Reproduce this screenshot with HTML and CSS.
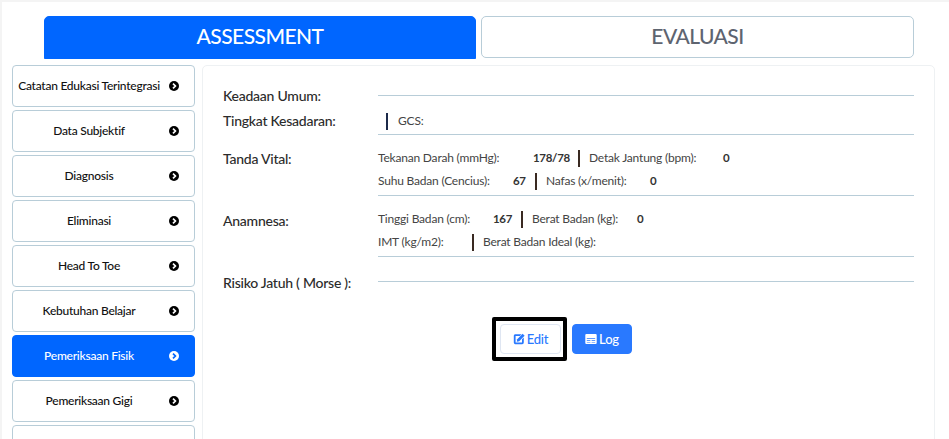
FILE: index.html
```html
<!DOCTYPE html>
<html lang="id">
<head>
<meta charset="utf-8">
<title>Assessment</title>
<link rel="stylesheet" href="styles.css">
</head>
<body>
<div class="page">
  <div class="tabs">
    <div class="tab tab-active">ASSESSMENT</div>
    <div class="tab tab-plain">EVALUASI</div>
  </div>
  <div class="content">
    <nav class="side">
      <a class="item"><span class="item-label">Catatan Edukasi Terintegrasi</span><svg class="chev" viewBox="0 0 10 10"><circle cx="5" cy="5" r="5" fill="currentColor"/><path class="chev-p" d="M4 2.6 6.4 5 4 7.4" fill="none" stroke-width="1.7"/></svg></a>
      <a class="item"><span class="item-label">Data Subjektif</span><svg class="chev" viewBox="0 0 10 10"><circle cx="5" cy="5" r="5" fill="currentColor"/><path class="chev-p" d="M4 2.6 6.4 5 4 7.4" fill="none" stroke-width="1.7"/></svg></a>
      <a class="item"><span class="item-label">Diagnosis</span><svg class="chev" viewBox="0 0 10 10"><circle cx="5" cy="5" r="5" fill="currentColor"/><path class="chev-p" d="M4 2.6 6.4 5 4 7.4" fill="none" stroke-width="1.7"/></svg></a>
      <a class="item"><span class="item-label">Eliminasi</span><svg class="chev" viewBox="0 0 10 10"><circle cx="5" cy="5" r="5" fill="currentColor"/><path class="chev-p" d="M4 2.6 6.4 5 4 7.4" fill="none" stroke-width="1.7"/></svg></a>
      <a class="item"><span class="item-label">Head To Toe</span><svg class="chev" viewBox="0 0 10 10"><circle cx="5" cy="5" r="5" fill="currentColor"/><path class="chev-p" d="M4 2.6 6.4 5 4 7.4" fill="none" stroke-width="1.7"/></svg></a>
      <a class="item"><span class="item-label">Kebutuhan Belajar</span><svg class="chev" viewBox="0 0 10 10"><circle cx="5" cy="5" r="5" fill="currentColor"/><path class="chev-p" d="M4 2.6 6.4 5 4 7.4" fill="none" stroke-width="1.7"/></svg></a>
      <a class="item item-active"><span class="item-label">Pemeriksaan Fisik</span><svg class="chev" viewBox="0 0 10 10"><circle cx="5" cy="5" r="5" fill="currentColor"/><path class="chev-p" d="M4 2.6 6.4 5 4 7.4" fill="none" stroke-width="1.7"/></svg></a>
      <a class="item"><span class="item-label">Pemeriksaan Gigi</span><svg class="chev" viewBox="0 0 10 10"><circle cx="5" cy="5" r="5" fill="currentColor"/><path class="chev-p" d="M4 2.6 6.4 5 4 7.4" fill="none" stroke-width="1.7"/></svg></a>
      <a class="item"></a>
    </nav>
    <main class="card">
      <div class="row row-keadaan">
        <div class="label">Keadaan Umum:</div>
        <div class="val val-keadaan"></div>
      </div>
      <div class="row row-tingkat">
        <div class="label">Tingkat Kesadaran:</div>
        <div class="val val-tingkat"><span class="bar bar-gcs"></span><span class="small">GCS:</span></div>
      </div>
      <div class="row row-vital">
        <div class="label">Tanda Vital:</div>
        <div class="val val-multi">
          <div class="line">
            <span class="small w-darah">Tekanan Darah (mmHg):</span><b class="num n-darah">178/78</b><span class="bar"></span><span class="small w-jantung">Detak Jantung (bpm):</span><b class="num">0</b>
          </div>
          <div class="line">
            <span class="small w-suhu">Suhu Badan (Cencius):</span><b class="num n-suhu">67</b><span class="bar"></span><span class="small w-nafas">Nafas (x/menit):</span><b class="num">0</b>
          </div>
        </div>
      </div>
      <div class="row row-anam">
        <div class="label">Anamnesa:</div>
        <div class="val val-multi">
          <div class="line">
            <span class="small w-tinggi">Tinggi Badan (cm):</span><b class="num n-tinggi">167</b><span class="bar"></span><span class="small w-berat">Berat Badan (kg):</span><b class="num">0</b>
          </div>
          <div class="line">
            <span class="small w-imt">IMT (kg/m2):</span><span class="bar"></span><span class="small">Berat Badan Ideal (kg):</span>
          </div>
        </div>
      </div>
      <div class="row row-risiko">
        <div class="label">Risiko Jatuh ( Morse ):</div>
        <div class="val val-risiko"></div>
      </div>
      <div class="actions">
        <div class="focus-box">
          <button class="btn btn-edit"><svg class="ico" viewBox="0 0 12 12"><path d="M2 1.2h6.6L6.8 3H2.6v6.4H9V6.2l1.8-1.8v5.2A1.6 1.6 0 0 1 9.2 11.2H2A1.6 1.6 0 0 1 .8 9.6V2.6A1.6 1.6 0 0 1 2 1.2Z" fill="currentColor"/><path d="M4.2 6.2 9.6.8l2 2-5.4 5.4-2.4.5Z" fill="currentColor"/></svg>Edit</button>
        </div>
        <button class="btn btn-log"><svg class="ico" viewBox="0 0 12 12"><path d="M1.4 1h9.2A1.1 1.1 0 0 1 11.7 2.1v7.8A1.1 1.1 0 0 1 10.6 11H1.4A1.1 1.1 0 0 1 .3 9.9V2.1A1.1 1.1 0 0 1 1.4 1ZM1.8 5.1v.7h8.4v-.7ZM1.8 7.2v.7h3.6v-.7ZM6.6 7.2v.7h3.6v-.7ZM1.8 9v.6h3.6V9ZM6.6 9v.6h3.6V9Z" fill="currentColor" fill-rule="evenodd"/></svg>Log</button>
      </div>
    </main>
  </div>
</div>
</body>
</html>
```
FILE: styles.css
```css
* { box-sizing: border-box; }
html, body { margin: 0; height: 100%; overflow: hidden; }
body { background: #f4f4f4; font-family: Lato, "Open Sans", sans-serif; color: #212529; padding: 2px 0 0 2px; }
.page { background: #fff; height: 437px; padding-top: 14px; overflow: hidden; }
.tabs { display: flex; gap: 5px; margin-left: 42px; width: 870px; align-items: flex-start; }
.tab { height: 42px; border: 1px solid #b8cdd8; border-radius: 5px; background: #fff; color: #5e6470; font-size: 21px; font-weight: 500; letter-spacing: -0.55px; text-align: center; line-height: 38px; }
.tab-plain { width: 433px; }
.tab-active { width: 432px; height: 43px; background: #0066ff; border-color: #0066ff; color: #fff; border-radius: 5px 5px 0 0; }
.content { display: flex; margin-top: 6px; margin-left: 10px; gap: 7px; align-items: flex-start; }
.side { width: 183px; flex: none; display: flex; flex-direction: column; gap: 3px; }
.item { height: 42px; flex: none; display: flex; align-items: center; border: 1px solid #b8cdd8; border-radius: 4px; background: #fff; color: #111; font-size: 12px; font-weight: 500; letter-spacing: -0.25px; padding: 0 0 1px 4px; }
.item-label { width: 144px; text-align: center; white-space: nowrap; }
.chev { width: 10px; height: 10px; margin-left: 8px; color: #000; }
.chev-p { stroke: #fff; }
.item-active { background: #0066ff; border-color: #0066ff; color: #fff; }
.item-active .chev { color: #fff; }
.item-active .chev-p { stroke: #0066ff; }
.card { width: 733px; height: 400px; flex: none; border: 1px solid #eef1f3; border-radius: 5px; background: #fff; padding: 0 20px; }
.row { display: flex; align-items: flex-start; }
.label { width: 155px; flex: none; font-size: 14px; font-weight: 500; letter-spacing: -0.25px; color: #2b2b2b; line-height: 17px; }
.val { flex: 1; border-bottom: 1px solid #b8cdd8; }
.row-keadaan { padding-top: 21px; height: 44px; }
.val-keadaan { height: 9px; }
.row-tingkat { height: 23px; margin-top: 3px; }
.row-tingkat .label { margin-top: -1px; }
.val-tingkat { height: 22px; display: flex; align-items: flex-start; padding-left: 8px; }
.bar { display: inline-block; width: 2px; height: 17px; background: #3a2a22; flex: none; }
.bar-gcs { background: #1c2a4a; margin-right: 10px; }
.small { font-size: 12px; font-weight: 400; letter-spacing: -0.2px; color: #444; line-height: 15px; white-space: nowrap; }
.num { font-size: 11.5px; font-weight: 700; letter-spacing: -0.3px; color: #333; line-height: 15px; white-space: nowrap; }
.row-vital { margin-top: 14px; }
.val-multi { height: 46px; display: flex; flex-direction: column; gap: 7px; }
.line { display: flex; align-items: flex-start; height: 16px; }
.line .bar { margin-right: 9px; }
.w-darah { width: 155px; }
.n-darah { width: 45px; }
.w-jantung { width: 134px; }
.w-suhu { width: 135px; }
.n-suhu { width: 22px; }
.w-nafas { width: 104px; }
.w-tinggi { width: 115px; }
.n-tinggi { width: 28px; }
.w-berat { width: 105px; }
.w-imt { width: 94px; }
.row-anam { margin-top: 15px; }
.row-anam .label { margin-top: 1px; }
.row-risiko { margin-top: 17px; }
.val-risiko { height: 8px; }
.actions { display: flex; align-items: center; gap: 5px; margin-top: 26px; margin-left: 269px; }
.focus-box { border: 4px solid #000; border-radius: 2px; padding: 3px 2px 3px 4px; }
.btn { height: 30px; width: 60px; border-radius: 4px; font: 500 13px Lato, sans-serif; letter-spacing: -0.2px; display: flex; align-items: center; justify-content: center; gap: 2px; padding: 0; }
.btn-edit { width: 61px; background: #fff; border: 1px solid #dfe6f2; color: #2979ff; }
.btn-log { background: #2979ff; border: 1px solid #2979ff; color: #fff; }
.ico { width: 12px; height: 12px; flex: none; }
```
